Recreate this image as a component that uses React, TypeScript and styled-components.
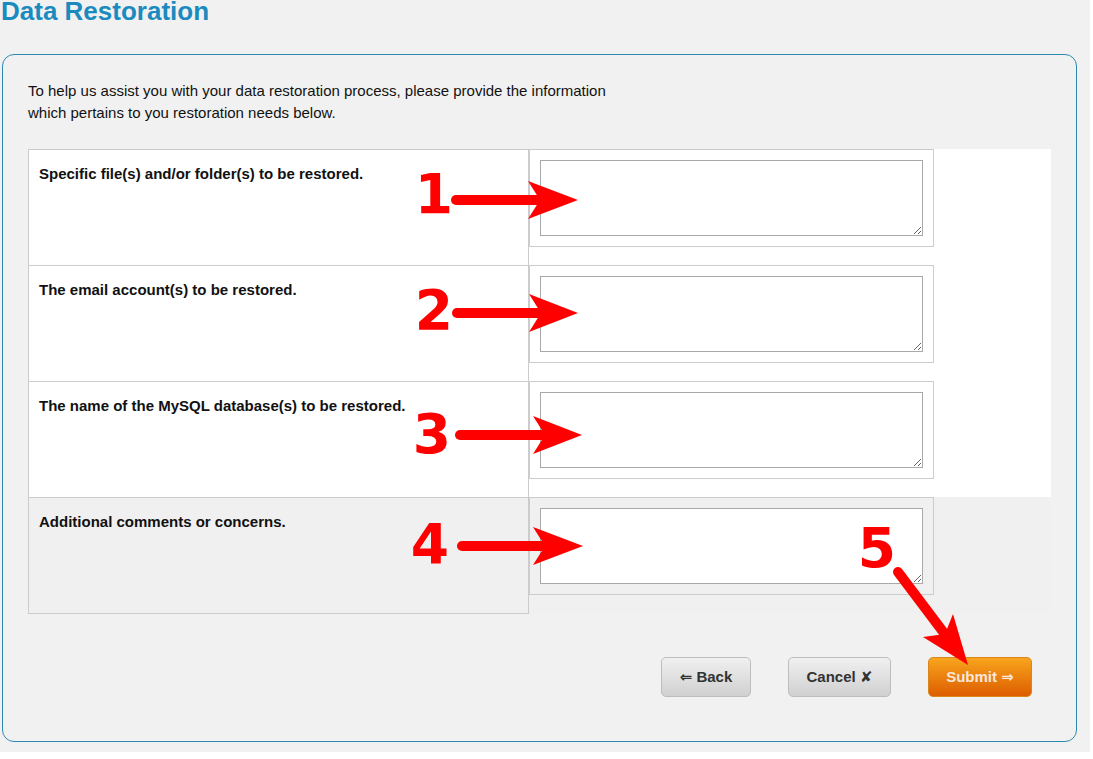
import styled, { createGlobalStyle } from "styled-components";

const GlobalStyle = createGlobalStyle`
  html, body {
    margin: 0;
    padding: 0;
    background: #ffffff;
  }

  body {
    font-family: "Liberation Sans", Arial, sans-serif;
    color: #111;
  }
`;

interface Field {
  label: string;
  muted?: boolean;
}

const fields: Field[] = [
  { label: "Specific file(s) and/or folder(s) to be restored." },
  { label: "The email account(s) to be restored." },
  { label: "The name of the MySQL database(s) to be restored." },
  { label: "Additional comments or concerns.", muted: true },
];

// red call-outs drawn over the screenshot
const markers = [
  { n: "1", nx: 434, ny: 213, x0: 456, y: 200, back: 528, tip: 578 },
  { n: "2", nx: 434, ny: 329, x0: 457, y: 313, back: 529, tip: 578 },
  { n: "3", nx: 432, ny: 453, x0: 460, y: 435, back: 533, tip: 582 },
  { n: "4", nx: 430, ny: 563, x0: 462, y: 546, back: 533, tip: 583 },
];

const Annotations = () => (
  <S.Overlay width="1090" height="752" viewBox="0 0 1090 752">
    {markers.map((m) => (
      <g key={m.n}>
        <text x={m.nx} y={m.ny}>{m.n}</text>
        <line x1={m.x0} y1={m.y} x2={m.back + 14} y2={m.y} />
        <polygon
          points={`${m.back},${m.y - 19} ${m.tip},${m.y} ${m.back},${m.y + 19} ${m.back + 12},${m.y}`}
        />
      </g>
    ))}
    <g>
      <text x={877} y={567}>5</text>
      <line x1={898} y1={572} x2={944} y2={633} />
      <polygon points="923,637 968,665 953,614 945,634" />
    </g>
  </S.Overlay>
);

const App = () => {
  return (
    <>
      <GlobalStyle />
      <S.Page>
        <S.Title>Data Restoration</S.Title>

        <S.Panel>
          <S.Intro>
            To help us assist you with your data restoration process, please provide the information
            which pertains to you restoration needs below.
          </S.Intro>

          <S.Table>
            {fields.map((f) => (
              <S.Row key={f.label} $muted={f.muted}>
                <S.Label>{f.label}</S.Label>
                <S.InputBox>
                  <S.TextArea />
                </S.InputBox>
              </S.Row>
            ))}
          </S.Table>

          <S.Actions>
            <S.Button type="button" $width={90}>
              ⇐ Back
            </S.Button>
            <S.Button type="button" $width={103}>
              Cancel ✘
            </S.Button>
            <S.Button type="button" $width={104} $primary>
              Submit ⇒
            </S.Button>
          </S.Actions>
        </S.Panel>

        <Annotations />
      </S.Page>
    </>
  );
};

const S = {
  Page: styled.div`
    position: relative;
    overflow: hidden;

    width: 1090px;
    height: 752px;
    background: #f1f1f1;
  `,

  Title: styled.h1`
    margin: -4px 0 0 1px;

    font-size: 26px;
    line-height: 30px;
    font-weight: bold;
    color: #1b8bbf;
  `,

  Panel: styled.section`
    box-sizing: border-box;
    width: 1075px;
    margin: 28px 0 0 2px;
    padding: 25px 25px 44px;

    border: 1px solid #2e89b2;
    border-radius: 12px;
  `,

  Intro: styled.p`
    max-width: 600px;
    margin: 0;

    font-size: 15px;
    line-height: 22px;
    color: #111;
  `,

  Table: styled.div`
    display: flex;
    flex-direction: column;

    margin-top: 25px;
  `,

  Row: styled.div<{ $muted?: boolean }>`
    display: grid;
    grid-template-columns: 501px 405px;
    align-items: start;

    background: ${({ $muted }) => ($muted ? "#f0f0f0" : "#ffffff")};

    & + & {
      margin-top: -1px;
    }
  `,

  Label: styled.div`
    box-sizing: border-box;
    height: 117px;
    padding: 13px 10px;

    border: 1px solid #cccccc;

    font-size: 15px;
    font-weight: bold;
    line-height: 22px;
    color: #111;
  `,

  InputBox: styled.div`
    padding: 10px;
    border: 1px solid #cccccc;
  `,

  TextArea: styled.textarea`
    display: block;
    box-sizing: border-box;
    width: 383px;
    height: 76px;
    margin: 0;

    border: 1px solid #a9a9a9;
    background: #ffffff;
    font-family: "Liberation Mono", monospace;
  `,

  Actions: styled.div`
    display: flex;
    justify-content: flex-end;
    gap: 37px;

    margin-top: 43px;
    padding-right: 19px;
  `,

  Button: styled.button<{ $primary?: boolean; $width: number }>`
    box-sizing: border-box;
    width: ${({ $width }) => $width}px;
    height: 40px;
    padding: 0;

    border: 1px solid ${({ $primary }) => ($primary ? "#d9861a" : "#bdbdbd")};
    border-radius: 5px;
    background: ${({ $primary }) =>
      $primary
        ? "linear-gradient(to bottom, #f8a51d, #dd5d00)"
        : "linear-gradient(to bottom, #f0f0f0, #d0d0d0)"};

    font-family: "Liberation Sans", "DejaVu Sans", sans-serif;
    font-size: 15px;
    font-weight: bold;
    color: ${({ $primary }) => ($primary ? "#fbe7dc" : "#333333")};
    cursor: pointer;
  `,

  Overlay: styled.svg`
    position: absolute;
    top: 0;
    left: 0;
    pointer-events: none;

    text {
      font-family: "DejaVu Sans", sans-serif;
      font-size: 55px;
      font-weight: bold;
      fill: #ff0000;
      text-anchor: middle;
    }

    line {
      stroke: #ff0000;
      stroke-width: 10;
      stroke-linecap: round;
    }

    polygon {
      fill: #ff0000;
    }
  `,
};

export default App;
